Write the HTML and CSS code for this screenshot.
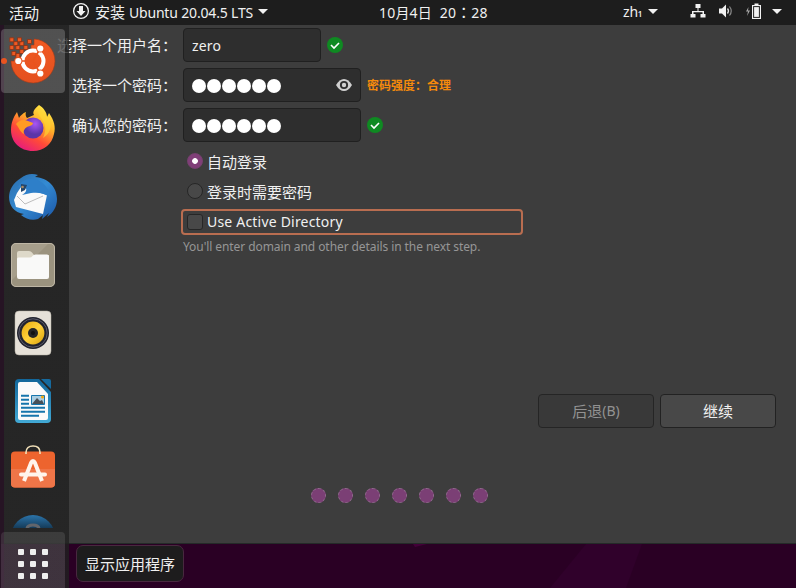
FILE: index.html
```html
<!DOCTYPE html>
<html lang="zh-CN">
<head>
<meta charset="utf-8">
<title>安装 Ubuntu</title>
<link rel="stylesheet" href="styles.css">
</head>
<body>
<header class="topbar">
  <span class="activities">活动</span>
  <div class="appmenu">
    <svg width="18" height="18" viewBox="0 0 18 18"><circle cx="9" cy="9" r="7.400" fill="none" stroke="#f2f2f2" stroke-width="1.300"/><path d="M7 4h4v5h2.500L9 14 4.500 9H7z" fill="#f2f2f2"/></svg>
    <span class="apptitle">安装 <span class="app-latin">Ubuntu 20.04.5 LTS</span></span>
    <i class="caret"></i>
  </div>
  <span class="clock">10月4日 &nbsp;20<span class="colon" lang="zh-TW">：</span>28</span>
  <div class="status">
    <span class="lang">zh<small>1</small></span><i class="caret"></i>
    <svg class="net" width="16" height="16" viewBox="0 0 16 16" fill="#f2f2f2"><path d="M5.500 1h5v4h-2v3H14v3h1.500v3.500h-5V11h2V9.300h-9V11h2v3.500h-5V11H2V8h5.500V5h-2z"/></svg>
    <svg class="vol" width="16" height="16" viewBox="0 0 16 16"><path d="M1 5.500h3L8 1.500v13L4 10.500H1z" fill="#f2f2f2"/><path d="M9.500 5.500q2 2.500 0 5" fill="none" stroke="#ddd" stroke-width="1.300"/><path d="M11.500 3.500q3.500 4.500 0 9" fill="none" stroke="#888" stroke-width="1.200"/></svg>
    <svg class="bat" width="16" height="16" viewBox="0 0 16 16"><path d="M2.500 4 0 8.500h2L1 13l3-5.500H2z" fill="#aaa"/><path d="M8.500.500h4V2H15v14H6V2h2.500z" fill="#f2f2f2"/><path d="M7.100 3.100h6.800v11.800H7.100z" fill="#222"/><path d="M8.100 4.100h4.800v9.800H8.100z" fill="#f2f2f2"/></svg>
    <i class="caret last"></i>
  </div>
</header>
<div class="desktop">
  <main class="window">
    <form class="account">
      <label>选择一个用户名：</label>
      <div class="field"><div class="input short">zero</div><svg class="ok" viewBox="0 0 16 16"><circle cx="8" cy="8" r="8" fill="#0f8a22"/><path d="m4 8 3 3 5-5" fill="none" stroke="#fff" stroke-width="1.600"/></svg></div>
      <label>选择一个密码：</label>
      <div class="field"><div class="input"><span class="dots"><i></i><i></i><i></i><i></i><i></i><i></i></span><svg class="eye" viewBox="0 0 16 12"><path d="M0 6Q3.500 0 8 0t8 6q-3.500 6-8 6T0 6z" fill="#d0d0d0"/><circle cx="8" cy="6" r="4.100" fill="#2e2e2e"/><circle cx="8" cy="6" r="2.200" fill="#d0d0d0"/></svg></div><span class="strength">密码强度：合理</span></div>
      <label>确认您的密码：</label>
      <div class="field"><div class="input"><span class="dots"><i></i><i></i><i></i><i></i><i></i><i></i></span></div><svg class="ok" viewBox="0 0 16 16"><circle cx="8" cy="8" r="8" fill="#0f8a22"/><path d="m4 8 3 3 5-5" fill="none" stroke="#fff" stroke-width="1.600"/></svg></div>
    </form>
    <div class="options">
      <div class="option"><i class="radio on"></i><span>自动登录</span></div>
      <div class="option"><i class="radio"></i><span>登录时需要密码</span></div>
      <div class="option focus"><i class="check"></i><span class="ad">Use Active Directory</span></div>
      <p class="hint">You'll enter domain and other details in the next step.</p>
    </div>
    <div class="actions"><div class="btn disabled">后退<span>(B)</span></div><div class="btn">继续</div></div>
    <div class="pager"><i></i><i></i><i></i><i></i><i></i><i></i><i></i></div>
  </main>
  <svg class="wall" width="796" height="44" viewBox="0 0 796 44"><path d="M586 0h56l-16 44h-76z" fill="#30012b"/><path d="M413 0h14l-12 3z" fill="#430039"/></svg>
  <nav class="dock">
    <div class="apps">
      <div class="tile active"><i class="running"></i>
        <svg viewBox="0 0 48 48"><defs><linearGradient id="u" x2="0" y2="1"><stop stop-color="#f15a22"/><stop offset="1" stop-color="#e4501f"/></linearGradient></defs>
        <path d="M25 2A22 22 0 1 1 2 25V24H6V22H10V20H14V16H18V12H22V8H25z" fill="url(#u)" stroke="#a43a18" stroke-width=".6"/>
        <g fill="#ef5a24" stroke="#8e3214" stroke-width=".8"><path d="M.8.800h4v4h-4zM8.500.800h4v4h-4zM4.800 4.600h4v4h-4zM10.800 4.600h4v4h-4zM.8 8.500h4v4h-4zM6.800 8.500h4v4h-4zM18.500 2.500h4v4h-4zM14.800 8.500h4v4h-4zM2.800 14.500h4v4h-4zM10.800 12.500h4v4h-4zM6.800 16.500h4v4h-4z"/></g>
        <circle cx="24" cy="24" r="10.500" fill="none" stroke="#fff" stroke-width="4"/><path d="m24 24 8-14M24 24H8M24 24l8 14" stroke="#e9541f" stroke-width="1.600"/>
        <circle cx="9.300" cy="24" r="4.100" fill="#e9541f"/><circle cx="31.300" cy="11.500" r="4.100" fill="#e9541f"/><circle cx="31.300" cy="36.500" r="4.100" fill="#e9541f"/><circle cx="9.300" cy="24" r="3.100" fill="#fff"/><circle cx="31.300" cy="11.500" r="3.100" fill="#fff"/><circle cx="31.300" cy="36.500" r="3.100" fill="#fff"/></svg>
      </div>
      <div class="tile"><svg viewBox="0 0 48 48"><defs><linearGradient id="f" x1=".8" y1="0" x2=".2" y2="1"><stop stop-color="#fff04a"/><stop offset=".35" stop-color="#ffb128"/><stop offset=".65" stop-color="#ff4a38"/><stop offset="1" stop-color="#e31587"/></linearGradient><radialGradient id="g" cx=".6" cy=".3"><stop stop-color="#a955f5"/><stop offset="1" stop-color="#5b35a8"/></radialGradient></defs>
        <path d="M30 0c5 3 8 8 8 12l2-4c5 7 7 14 5 21-2 10-10 17-21 17C11 46 2 37 2 25 2 18 4 13 8 7l2 6c1-2 4-5 7-6-1 2 0 5 1 6l7-3c-2-3 1-7 5-10z" fill="url(#f)"/><path d="M30 2c-3 5 1 9 4 14s3 10 0 17c8-5 9-12 6-20-4-4-8-5-10-11z" fill="#ffd936" opacity=".6"/><circle cx="24" cy="23" r="10.500" fill="url(#g)"/><path d="M7 19c3-4 8-5 12-3l5 2c0 2-3 3-6 4-3 2-4 4-3 7-3-1-5-6-8-10z" fill="#ff9b24"/></svg></div>
      <div class="tile"><svg viewBox="0 0 48 48"><defs><linearGradient id="t" x1="0" y1="0" x2="1" y2="1"><stop stop-color="#2a6cab"/><stop offset=".5" stop-color="#348bd3"/><stop offset="1" stop-color="#1b55a5"/></linearGradient></defs>
        <path d="M12 5C17 1 23 0 29 2l-3 2c14 1 22 11 22 22 0 8-4 14-10 18l2-4-7 6 1-4-5 4c-6 2-12 0-17-4l3-1C5 40 0 32 0 24 0 17 4 10 12 5z" fill="url(#t)"/><path d="M8 20 12 14l26 8-4 19L7 34 5 27z" fill="#fafafa"/><path d="M8 23l8 8 18-8" fill="none" stroke="#b5b5b5" stroke-width=".9"/><path d="M9 14c4-8 15-11 23-5 6 4 9 10 9 15-6-4-12-5-19-4l-9 2c3-2 5-4 4-7z" fill="#2e7fc9"/><path d="m12 11 6 1-2 5-4 2z" fill="#24466c"/><circle cx="13.500" cy="14" r="1.300" fill="#aa8a63"/></svg></div>
      <div class="tile"><svg viewBox="0 0 48 48"><rect x="2" y="2" width="44" height="44" rx="5" fill="#a69e8b"/><path d="M2 40 40 2h1a5 5 0 0 1 5 5v34a5 5 0 0 1-5 5H7a5 5 0 0 1-5-5z" fill="#928a77" opacity=".55"/><rect x="2.500" y="2.500" width="43" height="43" rx="4.500" fill="none" stroke="#beb6a5"/><path d="M8 12q0-2 2-2h10q2 0 3 1.500l2 2.500H40v10H8z" fill="#ded9c9"/><path d="M8 18q0-1.500 1.500-1.500h11q2 0 3-1.500t3-1.500H38q2 0 2 2V36q0 2-2 2H10q-2 0-2-2z" fill="#f9f9f8"/></svg></div>
      <div class="tile"><svg viewBox="0 0 48 48"><defs><linearGradient id="r" x2="1" y2="1"><stop stop-color="#e6a80d"/><stop offset=".5" stop-color="#ffd13b"/><stop offset="1" stop-color="#dba20b"/></linearGradient></defs><rect x="6" y="2" width="36" height="44" rx="4" fill="#e6e1d8" stroke="#b7b1a7" stroke-width=".5"/><circle cx="24" cy="24" r="16" fill="#22232e"/><circle cx="24" cy="24" r="14.200" fill="none" stroke="#5b5b6b"/><circle cx="24" cy="24" r="11.400" fill="url(#r)"/><circle cx="24" cy="24" r="5" fill="#242426"/><circle cx="24" cy="24" r="2" fill="#111"/></svg></div>
      <div class="tile"><svg viewBox="0 0 48 48"><defs><linearGradient id="w" x2="0" y2="1"><stop stop-color="#12669a"/><stop offset="1" stop-color="#42a9d5"/></linearGradient></defs><path d="M10 2h20l12 13v27q0 4-4 4H10q-4 0-4-4V6q0-4 4-4z" fill="url(#w)"/><path d="M11 5h17l11 12v24q0 2-2 2H11q-2 0-2-2V7q0-2 2-2z" fill="#fafafa"/><path d="M32 2h8q2 0 2 2v8z" fill="#166a9e"/><path d="M12 18.700h8M12 22.700h8M12 26.700h8M12 30.700h24M12 34.700h24M12 38.700h18" stroke="#1675ac" stroke-width="2"/><path d="M22.500 18.500h13v9h-13z" fill="#a9cde1" stroke="#1675ac"/><path d="m23 27 5-6 3 3 2-1 2 4z" fill="#474f57"/><circle cx="33.500" cy="20" r="1.500" fill="#f5a70b"/></svg></div>
      <div class="tile"><svg viewBox="0 0 48 48"><rect x="2" y="6.500" width="44" height="36" rx="4" fill="#ed642e"/><path d="M2 24h44v14.500q0 4-4 4H6q-4 0-4-4z" fill="#ef7548"/><path d="M17 9V7.500C17 3 20 1 24 1s7 2 7 6.500V9" fill="none" stroke="#f0dfb8" stroke-width="1.600"/><path d="m15 36 7-18q2-4 4 0l7 18" fill="none" stroke="#fff4ec" stroke-width="4"/><path d="M12 29.500h24" stroke="#fff4ec" stroke-width="4" stroke-linecap="round"/></svg></div>
      <div class="tile"><svg viewBox="0 0 48 48"><defs><linearGradient id="h" x2="0" y2="1"><stop stop-color="#2b74aa"/><stop offset=".3" stop-color="#153b59"/></linearGradient></defs><circle cx="24" cy="24" r="22" fill="url(#h)"/><path d="M18 16q0-4 6-4t6 4-5 6" fill="none" stroke="#62656b" stroke-width="3"/></svg></div>
    </div>
    <div class="showapps"><i></i><i></i><i></i><i></i><i></i><i></i><i></i><i></i><i></i></div>
  </nav>
  <div class="tooltip">显示应用程序</div>
</div>
</body>
</html>
```
FILE: styles.css
```css
* { box-sizing: border-box; }
body { margin: 0; width: 796px; height: 588px; overflow: hidden; background: #2a0024; color: #f0f0f0; font: 15px/20px "Noto Sans", "Noto Sans CJK SC", sans-serif; white-space: nowrap; }
svg { display: block; flex: none; }
i { display: block; flex: none; }
.topbar { height: 25px; background: #1d1d1d; display: flex; align-items: center; font-size: 14.500px; }
.activities { padding-left: 9px; width: 72px; font-size: 15px; }
.appmenu { display: flex; align-items: center; width: 307px; gap: 5px; }
.appmenu svg { margin-top: -3px; }
.apptitle { width: 158px; font-size: 15px; }
.app-latin { font-size: 14px; letter-spacing: -0.17px; }
.caret { border: 5px solid transparent; border-top-color: #f2f2f2; border-bottom: 0; margin-top: -2px; }
.clock { width: 244px; font-size: 14px; letter-spacing: .2px; }
.colon { font-family: "Noto Sans CJK TC", sans-serif; font-size: 15px; line-height: 1; }
.status { display: flex; align-items: center; }
.lang { width: 25px; font-size: 14px; letter-spacing: -.2px; }
.lang small { font-size: 8px; font-weight: 600; }
.net { margin: -3px 0 0 32px; }
.vol { margin: -3px 0 0 12px; }
.bat { margin: -3px 0 0 12px; }
.caret.last { margin-left: 10px; }
.desktop { position: relative; height: 563px; }
.window { height: 519px; margin-left: 4px; padding-top: 3px; background: #3d3d3d; border-bottom: 1px solid #242a28; display: flex; flex-direction: column; }
.account { display: grid; grid-template-columns: 173px auto; grid-auto-rows: 34px; gap: 6px; align-items: center; }
.account label { text-align: right; font-size: 15px; }
.field { display: flex; align-items: center; gap: 6px; }
.input { width: 178px; height: 34px; border: 1px solid #202020; border-radius: 4px; background: #2e2e2e; padding: 0 8px; display: flex; align-items: center; justify-content: space-between; font-size: 14px; letter-spacing: .15px; }
.input.short { width: 138px; padding-top: 2px; }
.ok { width: 16px; height: 16px; }
.eye { width: 16px; height: 12px; }
.dots { display: flex; gap: 1px; padding-top: 1px; }
.dots i { width: 14px; height: 14px; border-radius: 50%; background: #fff; }
.strength { color: #f58a0c; font-size: 12px; font-weight: 700; padding-top: 2px; }
.options { width: 342px; margin: 5px 0 0 177px; }
.option { height: 30px; display: flex; align-items: center; gap: 4px; padding-left: 6px; }
.radio, .check { width: 16px; height: 16px; border: 1px solid #262626; background: #484848; }
.radio { border-radius: 50%; margin-top: -2px; }
.radio.on { border-color: #76406f; background: radial-gradient(circle, #fff 2.500px, #803f78 3.200px); }
.check { border-radius: 3px; }
.focus { height: 26px; margin-top: 2px; border: 2px solid #b96d50; border-radius: 4px; padding-left: 4px; }
.option .ad { font-size: 14px; letter-spacing: .2px; }
.hint { margin: 2px 0 0 2px; font-size: 12px; color: #969696; letter-spacing: -.08px; }
.actions { display: flex; gap: 6px; justify-content: flex-end; margin: 137px 20px 0 0; }
.btn { width: 116px; height: 34px; border: 1px solid #222; border-radius: 4px; background: #484848; display: flex; align-items: center; justify-content: center; }
.disabled { background: #393939; color: #929292; border-color: #252525; }
.disabled span { font-size: 14px; }
.pager { display: flex; gap: 12px; margin: 60px 0 0 307px; }
.pager i { width: 15px; height: 15px; border-radius: 50%; background: #7b3f75; border: 1px dashed #926a8e; }
.dock { position: absolute; left: 0; top: 0; width: 69px; height: 563px; background: linear-gradient(90deg, #261424 4px, rgba(32, 32, 32, .8) 4px); padding: 4px 4px 0 1px; }
.apps { height: 499px; overflow: hidden; display: flex; flex-direction: column; gap: 4px; }
.tile { height: 64px; flex: none; padding: 8px; border-radius: 4px; }
.tile svg { width: 48px; height: 48px; }
.active { position: relative; background: rgba(255, 255, 255, .2); }
.running { position: absolute; left: 0; top: 29px; width: 6px; height: 6px; border-radius: 50%; background: #e95420; }
.showapps { height: 60px; margin-top: 4px; border-radius: 4px 4px 0 0; background: linear-gradient(rgba(255, 255, 255, .1) 12px, rgba(255, 224, 255, .13) 12px); display: grid; grid-template-columns: repeat(3, 6px); grid-auto-rows: 6px; gap: 6px; justify-content: center; padding-top: 17px; }
.showapps i { background: #eee; border-radius: 1px; }
.wall { display: block; }
.tooltip { position: absolute; left: 76px; top: 520px; width: 108px; height: 37px; border: 1px solid #48283f; border-radius: 7px; background: #1d1c1d; display: flex; align-items: center; justify-content: center; }
```
